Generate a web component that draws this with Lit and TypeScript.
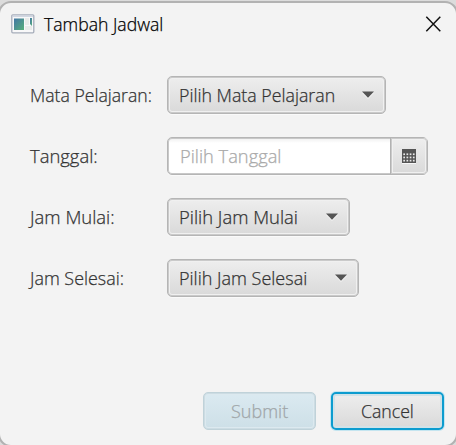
import { LitElement, html, css, svg } from "lit";
import { customElement, property } from "lit/decorators.js";

const textStyles = css`
  .fit { display: inline-block; white-space: pre; transform-origin: 0 50%; -webkit-text-stroke: .25px currentColor; }
`;

/* Text set condensed to an exact advance width. */
@customElement("fit-text")
class FitText extends LitElement {
  @property() text = "";
  @property({ type: Number }) width = 0;

  static styles = [textStyles, css`
    :host { display: block; flex: none; height: 24px; line-height: 24px; overflow: visible; }
  `];

  updated() {
    const el = this.renderRoot.querySelector(".fit") as HTMLElement;
    el.style.transform = `scaleX(${this.width / el.offsetWidth})`;
    this.style.width = `${this.width}px`;
  }

  render() {
    return html`<span class="fit">${this.text}</span>`;
  }
}

const fields = [
  { label: "Mata Pelajaran:", lw: 121.5, value: "Pilih Mata Pelajaran", vw: 156, width: 219 },
  { label: "Tanggal:", lw: 67.5, value: "Pilih Tanggal", vw: 101.5, width: 261, date: true },
  { label: "Jam Mulai:", lw: 85, value: "Pilih Jam Mulai", vw: 118.5, width: 183 },
  { label: "Jam Selesai:", lw: 94.5, value: "Pilih Jam Selesai", vw: 128, width: 192 },
];

const dots = [0, 1, 2].flatMap((r) =>
  [0, 1, 2, 3].map((c) => svg`<rect x=${1.3 + c * 3.2} y=${4.4 + r * 3.2} width="1.7" height="1.7" />`));

@customElement("app-root")
class AppRoot extends LitElement {
  static styles = css`
    :host {
      display: block; width: 456px; height: 445px; overflow: hidden;
      background: #dcdcdc; color: #333;
      font: 300 18px "Open Sans", "Noto Sans", sans-serif;
    }
    * { box-sizing: border-box; }
    .window {
      height: 446px; width: 460px; margin-left: -2px; border: 2px solid #b2b2b2;
      border-radius: 13px; background: #f3f3f3; display: flex; flex-direction: column;
      position: relative; top: 1px;
    }
    .title { display: flex; align-items: center; height: 41px; padding: 0 15px 0 11px; color: #000; }
    .title fit-text { margin-left: 9px; }
    .close { margin-left: auto; }
    svg { display: block; flex: none; }
    .form { display: flex; flex-direction: column; gap: 23px; padding: 32px 0 0 30px; }
    .row { display: grid; grid-template-columns: 137px auto; align-items: center; justify-content: start; height: 38px; }
    .control {
      height: 38px; border: 1px solid #b5b5b5; border-radius: 5px;
      display: flex; align-items: center;
    }
    .combo, .picker { background: linear-gradient(#eeeeee, #d9d9d9); }
    .combo { padding: 0 11px; justify-content: space-between; box-shadow: inset 0 0 0 1px #cacaca, inset 0 0 0 2px #f0f0f0, 0 1px #fafafa; }
    .date { background: linear-gradient(#efefef, #fff 5px); padding-left: 12px; color: #aaa; justify-content: space-between; box-shadow: inset 0 0 0 1px #c8c8c8, 0 1px #fafafa; }
    .picker {
      width: 37px; height: 36px; border-left: 1px solid #b2b2b2; border-radius: 0 4px 4px 0;
      display: flex; align-items: center; justify-content: center;
      box-shadow: inset 0 0 0 1px #cacaca, inset 0 0 0 2px #f0f0f0;
    }
    .actions { display: flex; gap: 15px; padding: 95px 0 0 203px; }
    .button { width: 113px; height: 38px; border-radius: 5px; display: flex; align-items: center; justify-content: center; }
    .submit { border: 1px solid #c0d2d9; color: #a0a6a9; background: linear-gradient(#dbeaf1, #cddfe7); box-shadow: inset 0 0 0 1px #ccdce3, inset 0 0 0 2px #dce9ef; }
    .cancel { border: 2px solid #0c9ccf; background: linear-gradient(#eeeeee, #d9d9d9); box-shadow: 0 0 0 1px #c4e5f0, inset 0 0 0 2px #d1e2e8; }
  `;

  render() {
    return html`
      <div class="window">
        <div class="title">
          <svg width="24" height="20" viewBox="0 0 24 20">
            <defs><linearGradient id="pane" x2="1" y2="1">
              <stop stop-color="#4376a5" /><stop offset="1" stop-color="#58b07a" />
            </linearGradient></defs>
            <rect x=".8" y=".8" width="22" height="18" rx="1" fill="#f8f8f9" stroke="#a6adba" stroke-width="1.3" />
            <path d="M1.5 2.2h20.6" stroke="#ccd3df" stroke-width="1.4" />
            <path d="M3 4.5h10v11.5H3z" fill="url(#pane)" />
            <path d="M14 4h4v7h-4zM14 12h7v4h-7z" fill="#e9ebe9" />
            <path d="M19 4h2v8l-2-2z" fill="url(#pane)" />
          </svg>
          <fit-text text="Tambah Jadwal" width="119.5"></fit-text>
          <svg class="close" width="16" height="16" viewBox="0 0 16 16" fill="none" stroke="#111" stroke-width="1.5">
            <path d="M1.3.8l14 14.4M15.3.8L1.3 15.2" />
          </svg>
        </div>
        <div class="form">
          ${fields.map((f) => html`
            <div class="row">
              <fit-text .text=${f.label} .width=${f.lw}></fit-text>
              <div class="control ${f.date ? "date" : "combo"}" style="width:${f.width}px">
                <fit-text .text=${f.value} .width=${f.vw}></fit-text>
                ${f.date
                  ? html`<div class="picker"><svg width="14" height="15" viewBox="0 0 14 15">
                      <path d="M0 14h14v1H0z" fill="#f7f7f7" />
                      <path d="M0 0h14v14H0z" fill="#555" /><g fill="#e8e8e8">${dots}</g>
                    </svg></div>`
                  : html`<svg width="12" height="8" viewBox="0 0 12 8">
                      <path d="M0 2h12L6 8z" fill="#f4f4f4" /><path d="M0 .5h12L6 6.8z" fill="#555" />
                    </svg>`}
              </div>
            </div>`)}
        </div>
        <div class="actions">
          <div class="button submit"><fit-text text="Submit" width="57"></fit-text></div>
          <div class="button cancel"><fit-text text="Cancel" width="53"></fit-text></div>
        </div>
      </div>`;
  }
}
